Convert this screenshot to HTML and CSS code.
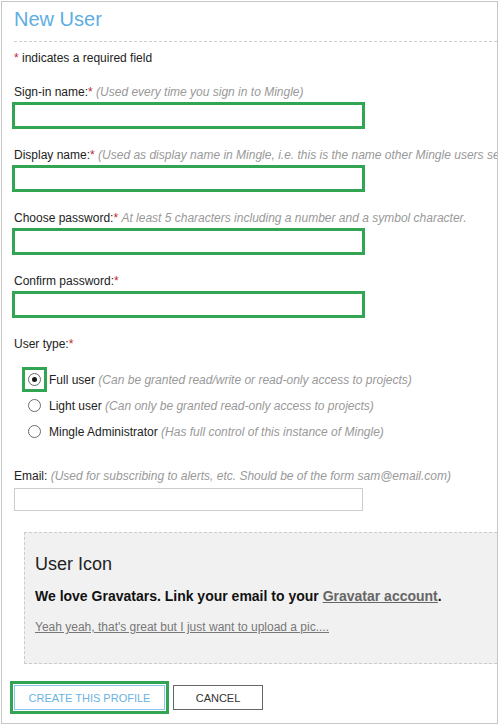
FILE: index.html
```html
<!DOCTYPE html>
<html>
<head>
<meta charset="utf-8">
<link rel="stylesheet" href="styles.css">
</head>
<body>
<div class="page">
  <h1 class="title">New User</h1>
  <div class="rule"></div>
  <p class="note"><span class="req">*</span> indicates a required field</p>

  <div class="field">
    <div class="label">Sign-in name:<span class="req">*</span> <span class="hint">(Used every time you sign in to Mingle)</span></div>
    <input class="input hl" type="text">
  </div>
  <div class="field">
    <div class="label">Display name:<span class="req">*</span> <span class="hint">(Used as display name in Mingle, i.e. this is the name other Mingle users see)</span></div>
    <input class="input hl" type="text">
  </div>
  <div class="field">
    <div class="label">Choose password:<span class="req">*</span> <span class="hint">At least 5 characters including a number and a symbol character.</span></div>
    <input class="input hl" type="password">
  </div>
  <div class="field">
    <div class="label">Confirm password:<span class="req">*</span></div>
    <input class="input hl" type="password">
  </div>

  <div class="label usertype">User type:<span class="req">*</span></div>
  <div class="radios">
    <div class="radio-row"><span class="slot hlbox"><span class="radio on"></span></span><span class="rtext">Full user <span class="hint">(Can be granted read/write or read-only access to projects)</span></span></div>
    <div class="radio-row"><span class="slot"><span class="radio"></span></span><span class="rtext">Light user <span class="hint">(Can only be granted read-only access to projects)</span></span></div>
    <div class="radio-row"><span class="slot"><span class="radio"></span></span><span class="rtext">Mingle Administrator <span class="hint">(Has full control of this instance of Mingle)</span></span></div>
  </div>

  <div class="label email-label">Email: <span class="hint">(Used for subscribing to alerts, etc. Should be of the form sam@email.com)</span></div>
  <input class="email" type="text">

  <div class="iconbox">
    <div class="icon-title">User Icon</div>
    <div class="icon-bold">We love Gravatars. Link your email to your <a class="glink" href="#">Gravatar account</a>.</div>
    <a class="upload" href="#">Yeah yeah, that's great but I just want to upload a pic....</a>
  </div>

  <div class="buttons">
    <button class="btn create">CREATE THIS PROFILE</button>
    <button class="btn cancel">CANCEL</button>
  </div>
</div>
</body>
</html>
```

FILE: styles.css
```css
* { box-sizing: border-box; }
html, body { margin: 0; padding: 0; background: #fff; }
body { font-family: "Liberation Sans", Arial, sans-serif; font-size: 12px; color: #222; }

.page {
  margin: 1px 1px 0 1px;
  height: 723px;
  border: 1px solid #c6c6c6;
  padding: 5px 0 0 12px;
  overflow: hidden;
  white-space: nowrap;
}

.title {
  margin: 0;
  font-size: 20px;
  line-height: 24px;
  font-weight: normal;
  color: #5eaee2;
}

.rule {
  margin-top: 10px;
  border-top: 1px dashed #cfcfcf;
  margin-right: -20px;
}

.note { margin: 8px 0 0 0; line-height: 16px; }
.req { color: #c0262d; }
.hint { color: #999; font-style: italic; }

.field { display: flex; flex-direction: column; align-items: flex-start; }
.note + .field { margin-top: 18px; }
.field + .field { margin-top: 18px; }

.label { line-height: 16px; }

.input {
  margin: 2px 0 0 -2px;
  width: 353px;
  height: 27px;
  background: #fff;
  border: 3px solid #31a552;
  padding: 0;
}

.usertype { margin-top: 18px; }

.radios { display: flex; flex-direction: column; gap: 1px; margin-top: 15px; }
.radio-row { display: flex; align-items: center; height: 25px; line-height: 16px; }
.slot {
  width: 25px;
  height: 25px;
  margin-left: 8px;
  display: flex;
  align-items: center;
  justify-content: center;
}
.hlbox { border: 3px solid #31a552; }
.radio {
  width: 13px;
  height: 13px;
  border: 1px solid #6b6b6b;
  border-radius: 50%;
  background: #fff;
  display: flex;
  align-items: center;
  justify-content: center;
}
.radio.on::after {
  content: "";
  width: 5px;
  height: 5px;
  border-radius: 50%;
  background: #1a1a1a;
}
.rtext { margin-left: 2px; }

.email-label { margin-top: 24px; }
.email {
  display: block;
  margin-top: 4px;
  width: 349px;
  height: 23px;
  border: 1px solid #cccccc;
  background: #fff;
  padding: 0;
}

.iconbox {
  margin: 21px -40px 0 10px;
  height: 132px;
  background: #f1f1f1;
  border: 1px dashed #cbcbcb;
  padding: 20px 0 0 10px;
}
.icon-title { font-size: 18px; line-height: 22px; color: #222; }
.icon-bold { margin-top: 13px; font-size: 14px; font-weight: bold; line-height: 17px; color: #111; }
.glink { color: #666; text-decoration: underline; }
.upload { display: inline-block; margin-top: 14px; color: #777; text-decoration: underline; line-height: 16px; }

.buttons { display: flex; gap: 8px; margin-top: 21px; }
.btn {
  height: 25px;
  background: #fff;
  font-family: "Liberation Sans", Arial, sans-serif;
  font-size: 11px;
  padding: 0;
  cursor: pointer;
}
.create {
  width: 151px;
  border: 1px solid #8cc6ea;
  color: #6ab2e2;
  outline: 3px solid #31a552;
  outline-offset: 1px;
}
.cancel {
  width: 90px;
  border: 1px solid #666;
  color: #333;
}
```
